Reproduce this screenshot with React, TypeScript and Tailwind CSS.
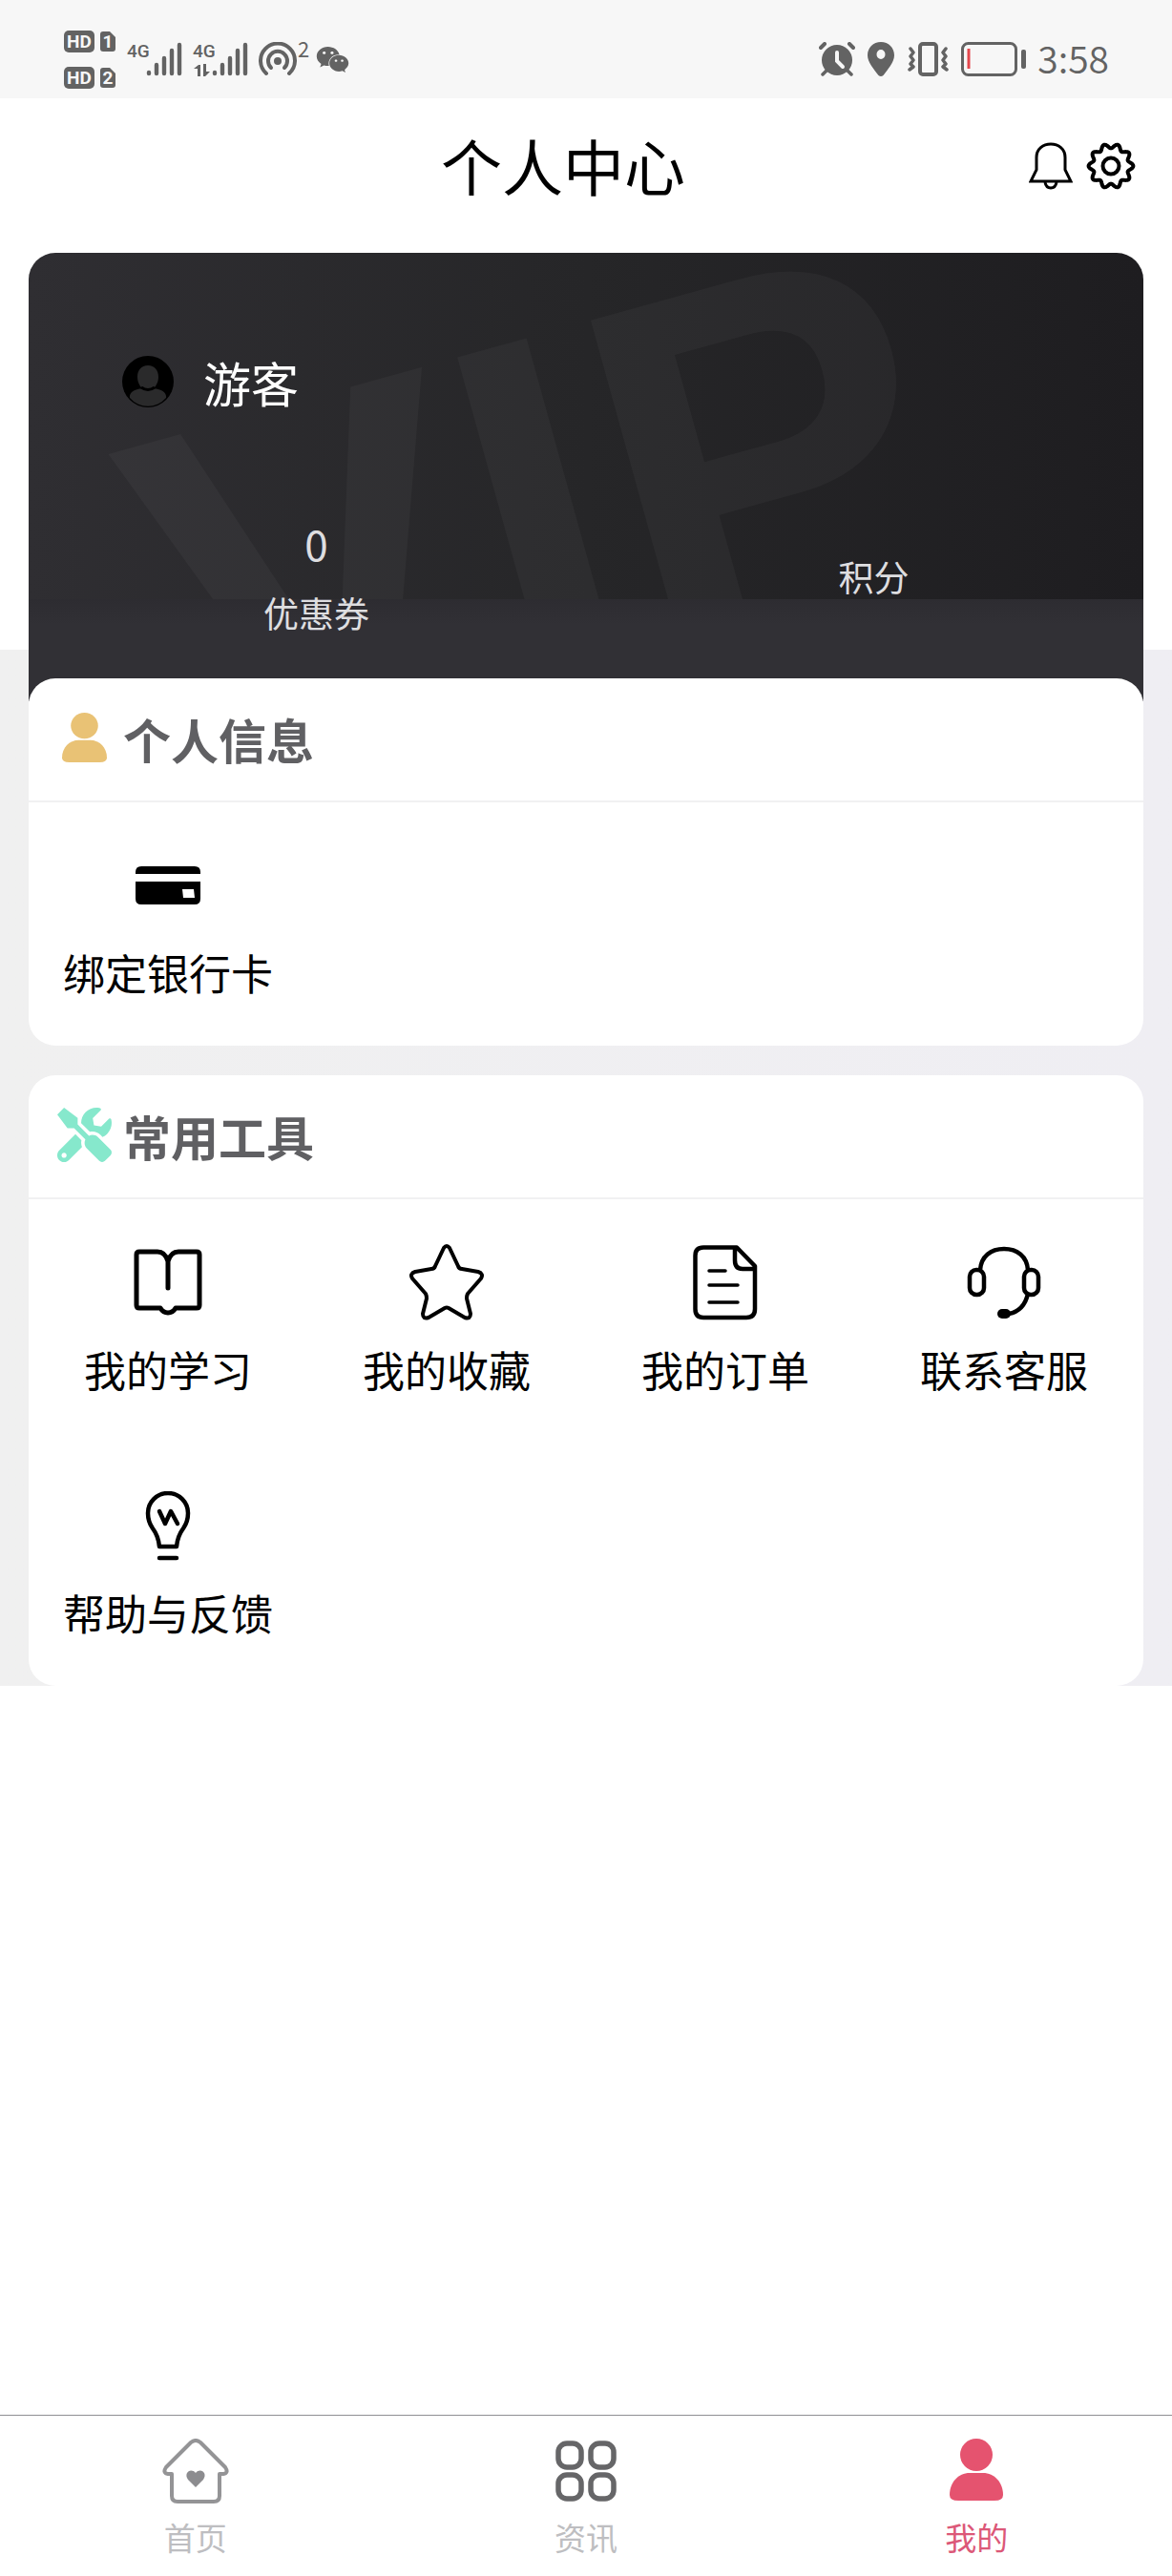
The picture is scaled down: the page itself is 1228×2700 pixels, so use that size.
import type { ReactNode } from "react";
import { FaTools, FaWeixin } from "react-icons/fa";

const gearPath =
  Array.from({ length: 180 }, (_, i) => {
    const a = (i / 180) * Math.PI * 2;
    const r = 21 + 2.4 * Math.cos(10 * a);
    return `${i ? "L" : "M"}${(26 + r * Math.cos(a)).toFixed(2)} ${(26 + r * Math.sin(a)).toFixed(2)}`;
  }).join("") + "Z";

function HdBadge({ sim }: { sim: string }) {
  return (
    <svg width="54" height="23" viewBox="0 0 54 23" className="font-['Roboto',sans-serif] font-bold">
      <rect width="32" height="23" rx="5" fill="#636363" />
      <text x="16" y="18" fontSize="19" textAnchor="middle" fill="#f7f7f7">HD</text>
      <path d="M41 1h7l6 6v12a3 3 0 0 1-3 3h-10a3 3 0 0 1-3-3V4a3 3 0 0 1 3-3z" fill="#636363" />
      <text x="46" y="18" fontSize="19" textAnchor="middle" fill="#f7f7f7">{sim}</text>
    </svg>
  );
}

function Signal({ data }: { data?: boolean }) {
  return (
    <svg width="58" height="44" viewBox="0 -4 58 44" fill="#636363" className="font-['Roboto',sans-serif] font-medium">
      <text x="0" y="16" fontSize="19">4G</text>
      {data && (
        <g>
          <path d="M1 28l5-4h2v12H5v-8z" />
          <path d="M11 23h3v8h4l-5 5h-2z" />
        </g>
      )}
      <g stroke="#636363" strokeWidth="4.4" strokeLinecap="round">
        <path d="M23 32v1M31 24v9M39 17v16M47 9v24M55 3v30" />
      </g>
    </svg>
  );
}

function StatusBar() {
  return (
    <div className="flex items-center justify-between bg-[#f7f7f7] pt-[21px] pb-[1px] pl-[67px] pr-[66px] text-[#636363]">
      <div className="flex h-[81px] items-center">
        <div className="flex flex-col gap-[15px] pt-[2px]">
          <HdBadge sim="1" />
          <HdBadge sim="2" />
        </div>
        <div className="ml-[12px] flex items-center">
          <Signal />
          <div className="ml-[11px]"><Signal data /></div>
          <svg width="40" height="36" viewBox="0 0 40 36" fill="none" stroke="#636363" strokeWidth="4" strokeLinecap="round" className="ml-[11px]">
            <path d="M8 33A18 18 0 1 1 32 33" />
            <path d="M13 27A10 10 0 1 1 27 27" />
            <circle cx="20" cy="20" r="4" fill="#636363" stroke="none" />
          </svg>
          <span className="mb-[24px] ml-[1px] text-[22px] leading-[20px]">2</span>
          <FaWeixin className="ml-[7px] mt-[2px] size-[35px]" />
        </div>
      </div>
      <div className="flex items-center">
        <svg width="38" height="36" viewBox="0 0 38 36" fill="none" stroke="#636363" strokeLinecap="round">
          <circle cx="19" cy="19" r="16" fill="#636363" stroke="none" />
          <path d="M19 11v9l6 6" stroke="#f7f7f7" strokeWidth="4" />
          <path d="M2 6l4-4M36 6l-4-4" strokeWidth="4" />
          <path d="M4 34l4-4M34 34l-4-4" strokeWidth="3.5" />
        </svg>
        <svg width="30" height="36" viewBox="0 0 30 36" fill="#636363" className="ml-[12px]">
          <path fillRule="evenodd" d="M15 0C7 0 1 6 1 14c0 7 7 15 11.500 21q2.500 2 5 0C22 29 29 21 29 14 29 6 23 0 15 0zm0 8a4.500 5 0 1 1 0 10 4.500 5 0 0 1 0-10z" />
        </svg>
        <svg width="43" height="36" viewBox="0 0 43 36" fill="none" stroke="#636363" strokeWidth="3.5" strokeLinejoin="round" strokeLinecap="round" className="ml-[13px]">
          <rect x="13" y="2" width="17" height="32" rx="3" strokeWidth="4" />
          <path d="M3 7l3 4-3 4 3 4-3 4 3 3-4 3M40 7l-3 4 3 4-3 4 3 4-3 3 4 3" />
        </svg>
        <svg width="68" height="36" viewBox="0 0 68 36" fill="none" className="ml-[13px]">
          <rect x="1.500" y="1.500" width="56" height="33" rx="6" stroke="#636363" strokeWidth="3" />
          <path d="M8 7v21" stroke="#e4474c" strokeWidth="3" />
          <rect x="63" y="8" width="5" height="20" rx="2" fill="#636363" />
        </svg>
        <time className="ml-[12px] pb-[4px] text-[39px] leading-[40px] font-[350]">3:58</time>
      </div>
    </div>
  );
}

function Person({ className }: { className: string }) {
  return (
    <svg viewBox="0 0 56 65" preserveAspectRatio="none" fill="currentColor" className={className}>
      <circle cx="28" cy="17" r="17" />
      <path d="M21 36h14c12 0 21 10 21 23q0 6-9 6H9q-9 0-9-6C0 46 9 36 21 36z" />
    </svg>
  );
}

function CardIcon() {
  return (
    <svg width="68" height="40" viewBox="0 0 68 40">
      <path d="M6 0h56q6 0 6 6v2H0V6q0-6 6-6z" />
      <path fillRule="evenodd" d="M0 16h68v18q0 6-6 6H6q-6 0-6-6zm49 8l1 9h12l-1-9z" />
    </svg>
  );
}

function BookIcon() {
  return (
    <svg width="74" height="70" viewBox="0 0 74 70" fill="none" stroke="#000" strokeWidth="5" strokeLinecap="round" strokeLinejoin="round">
      <path d="M37 41V13Q34 3 26 3H7Q4 3 4 6V59Q4 62 7 62H29Q32 67 37 67T45 62H67Q70 62 70 59V6Q70 3 67 3H48Q40 3 37 13" />
    </svg>
  );
}

function StarIcon() {
  return (
    <svg width="78" height="80" viewBox="0 0 78 80" fill="none" stroke="#000" strokeWidth="4" strokeLinejoin="round">
      <path d="M36 4Q39 0 42 4L51 23Q52 26 55 26L72 29Q78 31 75 36L61 52Q60 54 60 57L64 73Q64 79 58 77L41 67Q39 66 37 67L20 77Q14 79 14 73L18 57Q18 54 17 52L3 36Q0 31 6 29L23 26Q26 26 27 23Z" />
    </svg>
  );
}

function OrderIcon() {
  return (
    <svg width="68" height="79" viewBox="0 0 68 79" fill="none" stroke="#000" strokeWidth="4.500" strokeLinecap="round" strokeLinejoin="round">
      <path d="M46 2.500H11Q2.500 2.500 2.500 11V67Q2.500 76 11 76H56Q65 76 65 67V22ZM44 3V16Q44 25 52 25H65" />
      <path d="M17 27H34M17 42H47M17 60H47" strokeWidth="3.500" />
    </svg>
  );
}

function HeadsetIcon() {
  return (
    <svg width="78" height="76" viewBox="0 0 78 76" fill="none" stroke="#000" strokeWidth="4.500">
      <path d="M14 25C15 11 25 3 39 3S63 11 64 25M64 50Q60 68 44 71" />
      <rect x="3" y="25" width="15" height="26" rx="7" />
      <rect x="60" y="25" width="15" height="26" rx="7" />
      <rect x="32" y="66" width="14" height="10" rx="5" fill="#000" stroke="none" />
    </svg>
  );
}

function BulbIcon() {
  return (
    <svg width="48" height="73" viewBox="0 0 48 73" fill="none" stroke="#000" strokeWidth="4.500" strokeLinecap="round" strokeLinejoin="round">
      <path d="M15 58H33Q34 47 40 39Q45 32 45 23A21 21 0 0 0 3 23Q3 32 8 39Q14 47 15 58Z" />
      <path d="M15 21L21 34L27 21L34 34M15 70H33" />
    </svg>
  );
}

function Section({ icon, title, items }: { icon: ReactNode; title: string; items: { label: string; icon: ReactNode }[] }) {
  return (
    <section className="overflow-hidden rounded-[28px] bg-white">
      <h2 className="flex h-[130px] items-center border-b-2 border-[#f1f1f2] pb-[2px] pl-[30px] text-[50px] leading-[64px] font-bold text-[#606063]">
        <span className="flex w-[69px] items-center">{icon}</span>
        {title}
      </h2>
      <div className="grid grid-cols-4">
        {items.map((item) => (
          <a key={item.label} href="#" className="flex h-[255px] flex-col items-center pt-[46px] text-black">
            <span className="flex h-[82px] items-center">{item.icon}</span>
            <span className="mt-[20px] text-[44px] leading-[60px] whitespace-nowrap">{item.label}</span>
          </a>
        ))}
      </div>
    </section>
  );
}

function TabBar() {
  return (
    <nav className="mt-auto grid h-[169px] grid-cols-3 border-t border-[#8f8f93] text-[33px] leading-[44px] text-[#bebec1]">
      <a href="#" className="flex flex-col items-center pt-[24px]">
        <svg width="70" height="68" viewBox="0 0 70 68" fill="none" stroke="#949496" strokeWidth="4" strokeLinejoin="round" strokeLinecap="round">
          <path d="M30 4Q35 0 40 4L66 30Q70 36 64 37H60V60Q60 66 54 66H16Q10 66 10 60V37H6Q0 36 4 30Z" />
          <path d="M35 51L27 43C22 36 30 30 35 36C40 30 48 36 43 43Z" fill="#8c8c8f" stroke="none" />
        </svg>
        <span className="mt-[13px]">首页</span>
      </a>
      <a href="#" className="flex flex-col items-center pt-[24px]">
        <svg width="64" height="68" viewBox="0 0 64 68" fill="none" stroke="#666668" strokeWidth="5.500">
          <rect x="3" y="5" width="24" height="25" rx="9" />
          <rect x="37" y="5" width="24" height="25" rx="9" />
          <rect x="3" y="38" width="24" height="25" rx="9" />
          <rect x="37" y="38" width="24" height="25" rx="9" />
        </svg>
        <span className="mt-[13px]">资讯</span>
      </a>
      <a href="#" aria-current="page" className="flex flex-col items-center pt-[24px] text-[#dc5878]">
        <Person className="h-[65px] w-[56px] text-[#e5536f]" />
        <span className="mt-[16px]">我的</span>
      </a>
    </nav>
  );
}

export default function App() {
  return (
    <div className="flex min-h-screen flex-col bg-white font-['Noto_Sans_CJK_SC','Noto_Sans',sans-serif]">
      <StatusBar />
      <header className="flex h-[162px] items-center pr-[38px] pb-[20px] pl-[102px]">
        <h1 className="flex-1 pb-[4px] text-center text-[64px] leading-[80px] text-black">个人中心</h1>
        <div className="flex items-center gap-[14px]">
          <button type="button" aria-label="通知">
            <svg width="46" height="52" viewBox="0 0 46 52" fill="none" stroke="#000" strokeWidth="3">
              <path d="M8 30V17C8 8 15 3 23 3S38 8 38 17V30L44 42H2Z" />
              <path d="M17 43Q18 49 23 49T29 43" />
            </svg>
          </button>
          <button type="button" aria-label="设置">
            <svg width="52" height="52" viewBox="0 0 52 52" fill="none" stroke="#000" strokeWidth="4" strokeLinejoin="round">
              <path d={gearPath} />
              <circle cx="26" cy="26" r="8.500" />
            </svg>
          </button>
        </div>
      </header>

      <div className="px-[30px]">
        <div className="relative -mb-[54px] overflow-hidden rounded-t-[28px] bg-linear-to-r from-[#2f2e32] via-[#262628] to-[#1e1d20] pt-[103px] pb-[59px] text-white">
          <svg aria-hidden="true" viewBox="0 0 1168 470" preserveAspectRatio="xMidYMid slice" className="absolute inset-0 size-full">
            <defs>
              <linearGradient id="band" x1="0" y1="0" x2="0" y2="1">
                <stop offset="0" stopColor="#2d2c31" />
                <stop offset="0.25" stopColor="#313035" />
              </linearGradient>
            </defs>
            <text x="176" y="558" fontSize="522" fill="#fff" fillOpacity="0.035" transform="rotate(-15.500 176 558)" className="font-['Liberation_Sans',sans-serif] font-bold">VIP</text>
            <rect y="363" width="1168" height="107" fill="url(#band)" />
          </svg>
          <div className="relative flex items-center pl-[98px]">
            <svg width="54" height="54" viewBox="0 0 54 54">
              <circle cx="27" cy="27" r="27" fill="#000" />
              <path d="M27 10C20 10 16 15 16 22C16 28 19 32 21 34C12 35 7 39 8 44A25 25 0 0 0 46 44C47 39 42 35 33 34C35 32 38 28 38 22C38 15 34 10 27 10Z" fill="#2a2a2b" />
              <path d="M20 33Q27 38 34 33" fill="none" stroke="#000" strokeWidth="3" />
            </svg>
            <span className="ml-[31px] text-[50px] leading-[64px]">游客</span>
          </div>
          <div className="relative grid grid-cols-2 items-center pt-[96px] pb-[2px] text-center text-[37px] text-[#dedee0]">
            <a href="#" className="block pl-[19px]">
              <div className="text-[44px] leading-[82px]">0</div>
              <div className="leading-[64px]">优惠券</div>
            </a>
            <a href="#" className="block pt-[6px] pl-[19px] leading-[64px]">积分</a>
          </div>
        </div>
      </div>

      <main className="flex flex-col gap-[31px] bg-linear-to-r from-[#f0f0f0] to-[#efeef3] px-[30px] pt-[30px]">
        <div className="relative">
          <Section
            icon={<Person className="mb-[2px] ml-[5px] h-[52px] w-[47px] text-[#e9c275]" />}
            title="个人信息"
            items={[{ label: "绑定银行卡", icon: <CardIcon /> }]}
          />
        </div>
        <Section
          icon={<FaTools className="mb-[2px] size-[57px] text-[#86e8cc]" />}
          title="常用工具"
          items={[
            { label: "我的学习", icon: <BookIcon /> },
            { label: "我的收藏", icon: <StarIcon /> },
            { label: "我的订单", icon: <OrderIcon /> },
            { label: "联系客服", icon: <HeadsetIcon /> },
            { label: "帮助与反馈", icon: <BulbIcon /> },
          ]}
        />
      </main>
      <TabBar />
    </div>
  );
}
